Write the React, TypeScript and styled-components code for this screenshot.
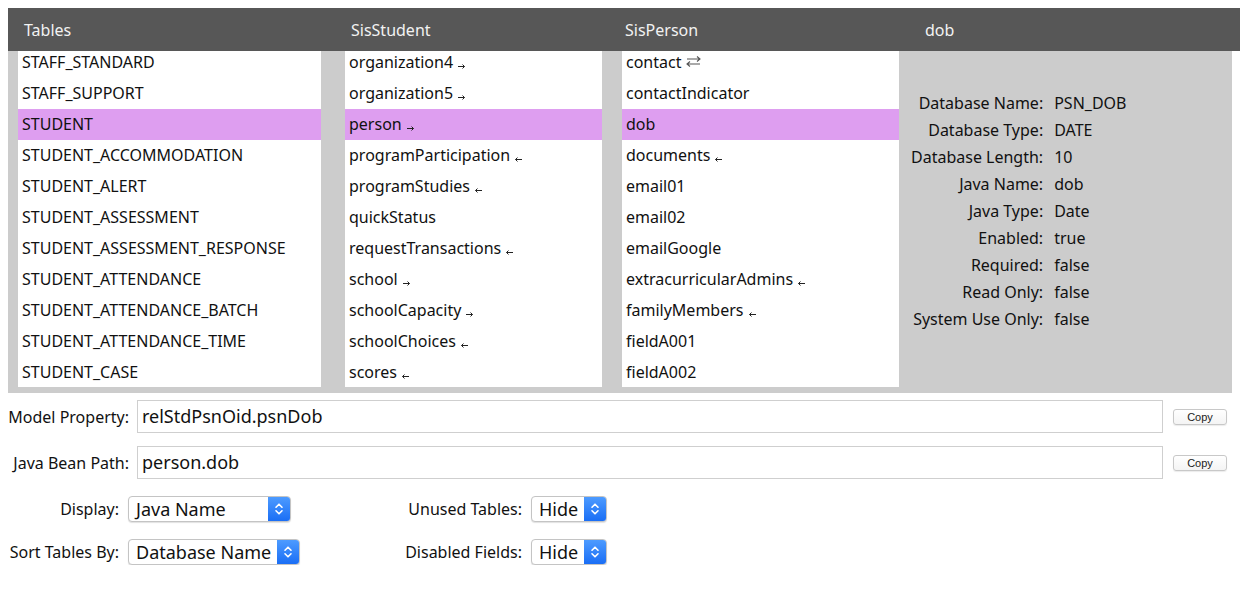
import styled, { createGlobalStyle } from "styled-components";

const GlobalStyle = createGlobalStyle`
  body {
    margin: 8px 0 8px 8px;
    font-family: "Noto Sans", "Open Sans", sans-serif;
    color: #111;
    background: #fff;
    overflow: hidden;
  }
`;

type Item = { name: string; link?: "to" | "from" | "both"; selected?: boolean };

const tables: Item[] = [
  { name: "STAFF_STANDARD" },
  { name: "STAFF_SUPPORT" },
  { name: "STUDENT", selected: true },
  { name: "STUDENT_ACCOMMODATION" },
  { name: "STUDENT_ALERT" },
  { name: "STUDENT_ASSESSMENT" },
  { name: "STUDENT_ASSESSMENT_RESPONSE" },
  { name: "STUDENT_ATTENDANCE" },
  { name: "STUDENT_ATTENDANCE_BATCH" },
  { name: "STUDENT_ATTENDANCE_TIME" },
  { name: "STUDENT_CASE" },
];

const student: Item[] = [
  { name: "organization4", link: "to" },
  { name: "organization5", link: "to" },
  { name: "person", link: "to", selected: true },
  { name: "programParticipation", link: "from" },
  { name: "programStudies", link: "from" },
  { name: "quickStatus" },
  { name: "requestTransactions", link: "from" },
  { name: "school", link: "to" },
  { name: "schoolCapacity", link: "to" },
  { name: "schoolChoices", link: "from" },
  { name: "scores", link: "from" },
];

const person: Item[] = [
  { name: "contact", link: "both" },
  { name: "contactIndicator" },
  { name: "dob", selected: true },
  { name: "documents", link: "from" },
  { name: "email01" },
  { name: "email02" },
  { name: "emailGoogle" },
  { name: "extracurricularAdmins", link: "from" },
  { name: "familyMembers", link: "from" },
  { name: "fieldA001" },
  { name: "fieldA002" },
];

const details: [string, string][] = [
  ["Database Name:", "PSN_DOB"],
  ["Database Type:", "DATE"],
  ["Database Length:", "10"],
  ["Java Name:", "dob"],
  ["Java Type:", "Date"],
  ["Enabled:", "true"],
  ["Required:", "false"],
  ["Read Only:", "false"],
  ["System Use Only:", "false"],
];

const Header = styled.div`
  display: grid;
  grid-template-columns: 327px 274px 300px 1fr;
  height: 43px;
  align-items: center;
  padding-left: 16px;
  background: #575757;
  color: #f2f2f2;
  font-size: 16px;
`;

const Browser = styled.div`
  display: grid;
  grid-template-columns: 327px 277px 277px 1fr;
  background: #cccccc;
  padding: 0 0 6px 10px;
  margin-right: 8px;
  height: 342px;
  box-sizing: border-box;
`;

const List = styled.div<{ $gap: number }>`
  background: #fff;
  overflow: hidden;
  height: 336px;
  margin-right: ${(p) => p.$gap}px;
`;

const ListInner = styled.div`
  margin-top: -4px;
`;

const Row = styled.div<{ $selected?: boolean }>`
  height: 31px;
  line-height: 31px;
  padding-left: 4px;
  font-size: 16px;
  white-space: nowrap;
  background: ${(p) => (p.$selected ? "#de9ef0" : "transparent")};
`;

const SmallArrow = styled.svg`
  margin-left: 5px;
  vertical-align: -1px;
`;

const SwapArrow = styled.svg`
  margin-left: 5px;
  vertical-align: 1px;
`;

const Details = styled.div`
  display: grid;
  grid-template-columns: max-content 1fr;
  grid-auto-rows: 27px;
  align-items: center;
  column-gap: 11px;
  align-content: start;
  padding: 38px 0 0 12px;
  font-size: 16px;
`;

const DetailLabel = styled.div`
  text-align: right;
`;

const Form = styled.div`
  display: flex;
  flex-direction: column;
  padding-top: 7px;
  margin-right: 8px;
`;

const FieldRow = styled.div`
  display: grid;
  grid-template-columns: 121px 1fr 54px;
  column-gap: 8px;
  align-items: center;
  margin-bottom: 13px;
  padding-right: 5px;
`;

const Label = styled.label`
  text-align: right;
  font-size: 16px;
  white-space: nowrap;
`;

const TextBox = styled.div`
  height: 33px;
  box-sizing: border-box;
  border: 1px solid #cfcfcf;
  padding: 0 4px;
  font-size: 18px;
  line-height: 31px;
  margin-right: 2px;
`;

const CopyButton = styled.button`
  height: 16px;
  width: 54px;
  padding: 0;
  font-family: "Liberation Sans", Arial, sans-serif;
  font-size: 11px;
  color: #222;
  background: linear-gradient(#ffffff, #f4f4f4);
  border: 1px solid #c8c8c8;
  border-radius: 3px;
  box-shadow: 0 1px 1px rgba(0, 0, 0, 0.08);
`;

const Options = styled.div`
  display: grid;
  grid-template-columns: 111px 250px 135px auto;
  column-gap: 9px;
  row-gap: 17px;
  align-items: center;
  justify-items: start;
  margin-top: 4px;
`;

const OptionLabel = styled(Label)`
  justify-self: end;
`;

const SelectBox = styled.div`
  display: flex;
  align-items: stretch;
  height: 26px;
  box-sizing: border-box;
  border: 1px solid #c4c4c4;
  border-radius: 4px;
  box-shadow: 0 1px 1px rgba(0, 0, 0, 0.12);
  background: #fff;
  overflow: hidden;
  font-size: 18px;
`;

const SelectText = styled.span`
  padding: 0 6px 0 7px;
  line-height: 24px;
  white-space: nowrap;
`;

const SelectArrows = styled.span`
  width: 22px;
  display: flex;
  align-items: center;
  justify-content: center;
  background: linear-gradient(#4d9bff, #1a6ef5);
`;

const Select = ({ value, pad = 0 }: { value: string; pad?: number }) => (
  <SelectBox>
    <SelectText style={pad ? { paddingRight: pad } : undefined}>{value}</SelectText>
    <SelectArrows>
      <svg width="10" height="14" viewBox="0 0 10 14" fill="none" stroke="#fff" strokeWidth="1.6" strokeLinecap="round" strokeLinejoin="round">
        <path d="M2 5.2 L5 2.2 L8 5.2" />
        <path d="M2 8.8 L5 11.8 L8 8.8" />
      </svg>
    </SelectArrows>
  </SelectBox>
);

const Arrow = ({ link }: { link?: Item["link"] }) => {
  if (!link) return null;
  if (link === "both")
    return (
      <SwapArrow width="15" height="11" viewBox="0 0 15 11" fill="none" stroke="#555" strokeWidth="1.1">
        <path d="M1 3 H14 M11 0.5 L14 3 L11 5.5" />
        <path d="M14 8 H1 M4 5.5 L1 8 L4 10.5" />
      </SwapArrow>
    );
  return (
    <SmallArrow width="7" height="5" viewBox="0 0 7 5" fill="none" stroke="#222" strokeWidth="1">
      {link === "to" ? <path d="M0 2.5 H6.5 M4.5 0.5 L6.5 2.5 L4.5 4.5" /> : <path d="M7 2.5 H0.5 M2.5 0.5 L0.5 2.5 L2.5 4.5" />}
    </SmallArrow>
  );
};

const ItemList = ({ items, gap }: { items: Item[]; gap: number }) => (
  <List $gap={gap}>
    <ListInner>
      {items.map((it) => (
        <Row key={it.name} $selected={it.selected}>
          {it.name}
          <Arrow link={it.link} />
        </Row>
      ))}
    </ListInner>
  </List>
);

export default function App() {
  return (
    <>
      <GlobalStyle />
      <Header>
        <span>Tables</span>
        <span>SisStudent</span>
        <span>SisPerson</span>
        <span>dob</span>
      </Header>
      <Browser>
        <ItemList items={tables} gap={24} />
        <ItemList items={student} gap={20} />
        <ItemList items={person} gap={0} />
        <Details>
          {details.map(([k, v]) => (
            <>
              <DetailLabel key={k}>{k}</DetailLabel>
              <div key={k + "v"}>{v}</div>
            </>
          ))}
        </Details>
      </Browser>
      <Form>
        <FieldRow>
          <Label>Model Property:</Label>
          <TextBox>relStdPsnOid.psnDob</TextBox>
          <CopyButton>Copy</CopyButton>
        </FieldRow>
        <FieldRow>
          <Label>Java Bean Path:</Label>
          <TextBox>person.dob</TextBox>
          <CopyButton>Copy</CopyButton>
        </FieldRow>
        <Options>
          <OptionLabel>Display:</OptionLabel>
          <Select value="Java Name" pad={42} />
          <OptionLabel>Unused Tables:</OptionLabel>
          <Select value="Hide" />
          <OptionLabel>Sort Tables By:</OptionLabel>
          <Select value="Database Name" />
          <OptionLabel>Disabled Fields:</OptionLabel>
          <Select value="Hide" />
        </Options>
      </Form>
    </>
  );
}
